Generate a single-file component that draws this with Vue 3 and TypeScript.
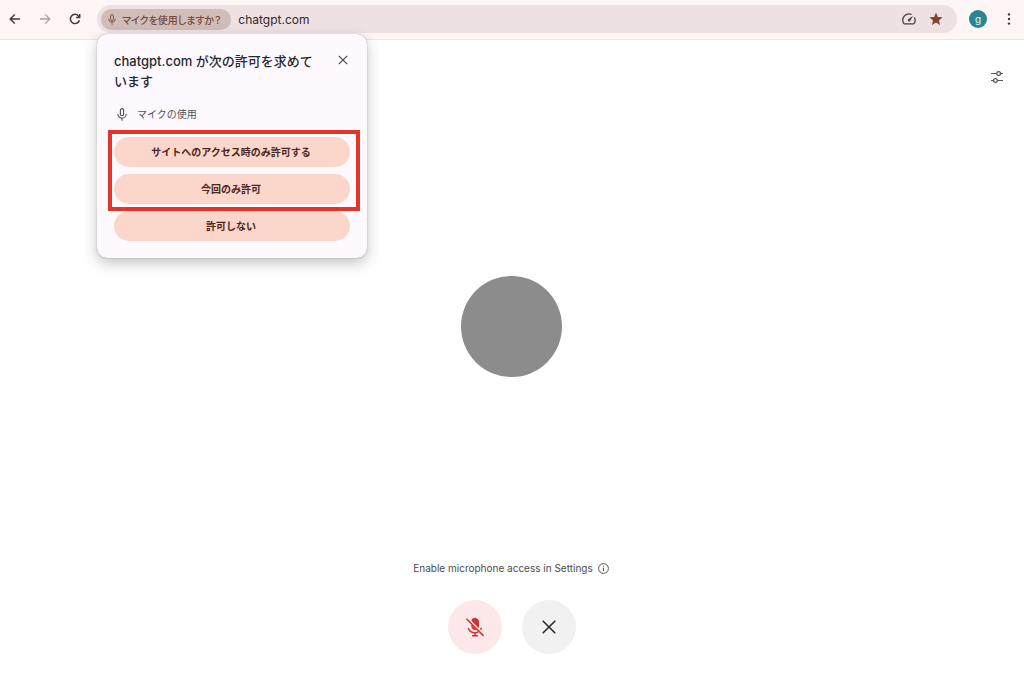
<script setup lang="ts">
import { ref } from 'vue'

const promptOpen = ref(true)
const allowChoices: string[] = ['サイトへのアクセス時のみ許可する', '今回のみ許可']
const close = () => {
  promptOpen.value = false
}
</script>

<template>
  <div class="browser">
    <header class="toolbar">
      <button class="tool" aria-label="戻る">
        <svg width="12" height="12" viewBox="0 0 12 12" fill="none" stroke="#453733" stroke-width="1.4">
          <path d="M11 6H1.3M5.8 1.4L1.2 6L5.8 10.6" />
        </svg>
      </button>
      <button class="tool" aria-label="進む">
        <svg width="12" height="12" viewBox="0 0 12 12" fill="none" stroke="#aaa09e" stroke-width="1.3">
          <path d="M1 6h9.7M6.2 1.4L10.8 6L6.2 10.6" />
        </svg>
      </button>
      <button class="tool" aria-label="再読み込み">
        <svg width="12" height="12" viewBox="0 0 12 12" fill="none" stroke="#453733" stroke-width="1.5">
          <path d="M10.4 7.2A4.6 4.6 0 1 1 9.4 2.9L10.6 4.2" />
          <path d="M10.7 .9V4.5H7.1" />
        </svg>
      </button>
      <div class="address">
        <button class="chip">
          <svg width="8" height="11" viewBox="0 0 8 11" fill="none" stroke="#81564a" stroke-width="1">
            <rect x="2.6" y=".6" width="2.8" height="6" rx="1.4" />
            <path d="M.7 4.8a3.3 3.3 0 0 0 6.6 0M4 8.2v2.5" />
          </svg>
          <span>マイクを使用しますか？</span>
        </button>
        <input class="url" type="text" value="chatgpt.com" aria-label="アドレス" />
        <button class="small" aria-label="パフォーマンス">
          <svg width="14" height="12" viewBox="0 0 14 12" fill="none" stroke="#4b4143" stroke-width="1.3">
            <path d="M12.4 4.4a6.3 6.3 0 0 1-.1 5.9q-.3.6-1 .6H2.7q-.7 0-1-.6A6.2 6.2 0 0 1 9.6 1.5" />
            <path d="M11.2 2.8L8.1 8A1.3 1.3 0 1 1 6.1 6.3Z" fill="#4b4143" stroke="none" />
          </svg>
        </button>
        <button class="small" aria-label="ブックマーク">
          <svg width="14" height="14" viewBox="0 0 14 14" fill="#84402f">
            <path d="M7 .5L8.8 5l4.7.3-3.6 3.1 1.2 4.7L7 10.6l-4.1 2.5 1.2-4.7L.5 5.3 5.2 5Z" />
          </svg>
        </button>
      </div>
      <button class="avatar" aria-label="プロフィール">g</button>
      <button class="tool" aria-label="メニュー">
        <svg width="4" height="14" viewBox="0 0 4 14" fill="#453733">
          <circle cx="2" cy="2.4" r="1.2" /><circle cx="2" cy="7" r="1.2" /><circle cx="2" cy="11.6" r="1.2" />
        </svg>
      </button>
    </header>

    <section v-if="promptOpen" class="prompt" role="dialog" aria-labelledby="prompt-title">
      <div class="prompt-head">
        <h1 id="prompt-title">chatgpt.com が次の許可を求めています</h1>
        <button class="dismiss" aria-label="閉じる" @click="close">
          <svg width="10" height="10" viewBox="0 0 10 10" fill="none" stroke="#4c464a" stroke-width="1.2">
            <path d="M.8.8l8.4 8.4M9.2.8L.8 9.2" />
          </svg>
        </button>
      </div>
      <p class="permission">
        <svg width="10" height="13" viewBox="0 0 10 13" fill="none" stroke="#514a4e" stroke-width="1.1">
          <rect x="3.4" y=".6" width="3.2" height="7.2" rx="1.6" />
          <path d="M.8 6a4.2 4.2 0 0 0 8.4 0M5 10.2v2.6" />
        </svg>
        <span>マイクの使用</span>
      </p>
      <div class="choices">
        <div class="allowed">
          <button v-for="choice in allowChoices" :key="choice" class="choice" @click="close">{{ choice }}</button>
        </div>
        <button class="choice" @click="close">許可しない</button>
      </div>
    </section>

    <main class="voice">
      <button class="settings" aria-label="Settings">
        <svg width="12" height="12" viewBox="0 0 12 12" fill="none" stroke="#555" stroke-width="1.2">
          <path d="M0 2.5h5.6M9.6 2.5H12M0 9.5h2.4M6.4 9.5H12" />
          <circle cx="7.6" cy="2.5" r="1.9" /><circle cx="4.4" cy="9.5" r="1.9" />
        </svg>
      </button>
      <div class="stage"><div class="orb"></div></div>
      <footer class="controls">
        <p class="hint">
          <span>Enable microphone access in Settings</span>
          <svg width="11" height="11" viewBox="0 0 11 11" fill="none" stroke="#555" stroke-width="1">
            <circle cx="5.5" cy="5.5" r="4.9" /><path d="M4.8 5h.7v3.2" />
            <circle cx="5.5" cy="3.1" r=".6" fill="#555" stroke="none" />
          </svg>
        </p>
        <div class="actions">
          <button class="round muted" aria-label="Unmute microphone">
            <svg width="20" height="20" viewBox="0 0 20 20" fill="none" stroke="#cf3030" stroke-width="1.5">
              <path d="M6.2 3.6A4 4 0 0 1 14 4.8v4.2q0 1.1-.5 2Z" fill="#cf3030" stroke="none" />
              <path d="M6.3 7.8L11.3 13A4 4 0 0 1 6.3 9Z" fill="#cf3030" stroke="none" />
              <path d="M3.3 11.2c1.1 3 3.6 4.5 6.7 4.5 1.2 0 2.2-.2 3.2-.8M15.4 12.6l1.2-1.6M10 15.5v3M7 18.8h6" />
              <path d="M1.4 1.7l17.2 17.2" />
            </svg>
          </button>
          <button class="round" aria-label="Close">
            <svg width="14" height="14" viewBox="0 0 14 14" fill="none" stroke="#2b2b2b" stroke-width="1.6" stroke-linecap="round">
              <path d="M1.2 1.2l11.6 11.6M12.8 1.2L1.2 12.8" />
            </svg>
          </button>
        </div>
      </footer>
    </main>
  </div>
</template>

<style>
body {
  margin: 0;
}
</style>

<style scoped>
.browser {
  position: relative;
  display: flex;
  flex-direction: column;
  min-height: 100vh;
  background: #fff;
  font-family: Inter, "Noto Sans CJK JP", sans-serif;
}
button {
  display: flex;
  align-items: center;
  justify-content: center;
  padding: 0;
  border: 0;
  background: none;
  font: inherit;
  cursor: pointer;
}
svg {
  display: block;
  flex: none;
}
h1,
p {
  margin: 0;
}
.toolbar {
  display: flex;
  align-items: center;
  box-sizing: border-box;
  height: 40px;
  padding-bottom: 1px;
  border-bottom: 1px solid #eee6e4;
  background: #fef6f4;
}
.tool {
  width: 30px;
  height: 30px;
}
.address {
  flex: 1;
  display: flex;
  align-items: center;
  box-sizing: border-box;
  height: 28px;
  margin: 0 12px 0 7px;
  padding: 0 14px 0 4px;
  border-radius: 14px;
  background: #eee1e3;
}
.chip {
  gap: 6px;
  height: 21px;
  padding: 0 10px 0 7px;
  border-radius: 11px;
  background: #cfbdb8;
  color: #754a3e;
  font-size: 10px;
  font-weight: 500;
  font-feature-settings: "palt";
  white-space: nowrap;
}
.url {
  flex: 1;
  min-width: 0;
  padding: 0 7px;
  border: 0;
  outline: 0;
  background: none;
  color: #30282a;
  font: inherit;
  font-size: 12px;
}
.small {
  width: 14px;
  height: 20px;
  margin-left: 13px;
}
.avatar {
  width: 18px;
  height: 18px;
  margin-right: 7px;
  border-radius: 50%;
  background: #2b858e;
  color: #e5f5f5;
  font-size: 10px;
  line-height: 18px;
}
.prompt {
  position: absolute;
  z-index: 1;
  top: 34px;
  left: 97px;
  box-sizing: border-box;
  width: 270px;
  padding: 17px;
  border-radius: 10px;
  background: #fef9ff;
  box-shadow: 0 0 1px rgba(0, 0, 0, 0.5), 0 5px 14px rgba(0, 0, 0, 0.24);
}
.prompt-head {
  display: flex;
  align-items: flex-start;
  justify-content: space-between;
}
h1 {
  width: 206px;
  color: #2a272b;
  font-size: 13px;
  font-weight: 500;
  line-height: 20px;
}
.dismiss {
  width: 14px;
  height: 18px;
}
.permission {
  display: flex;
  align-items: center;
  gap: 10px;
  padding: 15px 3px;
  color: #555055;
  font-size: 10px;
  line-height: 16px;
}
.choices,
.allowed {
  display: flex;
  flex-direction: column;
  gap: 7px;
}
.allowed {
  position: relative;
}
.allowed::after {
  content: "";
  position: absolute;
  inset: -7px -10px -7px -6px;
  border: 4px solid #e33528;
  pointer-events: none;
}
.choice {
  box-sizing: border-box;
  height: 30px;
  padding: 0 2px 2px 0;
  border-radius: 15px;
  background: #fbd7cb;
  color: #4e251c;
  font-size: 10px;
  font-weight: 700;
}
.voice {
  position: relative;
  flex: 1;
  display: flex;
  flex-direction: column;
}
.settings {
  position: absolute;
  top: 25px;
  right: 15px;
  width: 24px;
  height: 24px;
}
.stage {
  flex: 1;
  display: flex;
  align-items: center;
  justify-content: center;
  padding: 53px 1px 0 0;
}
.orb {
  width: 101px;
  height: 101px;
  border-radius: 50%;
  background: #8c8c8c;
}
.controls {
  display: flex;
  flex-direction: column;
  align-items: center;
  gap: 24px;
  padding-bottom: 22px;
}
.hint {
  display: flex;
  align-items: center;
  gap: 5px;
  padding-right: 2px;
  color: #4c4c4c;
  font-size: 10px;
  line-height: 16px;
}
.actions {
  display: flex;
  gap: 20px;
}
.round {
  width: 54px;
  height: 54px;
  border-radius: 50%;
  background: #f1f1f1;
}
.muted {
  background: #fce8e8;
}
</style>
